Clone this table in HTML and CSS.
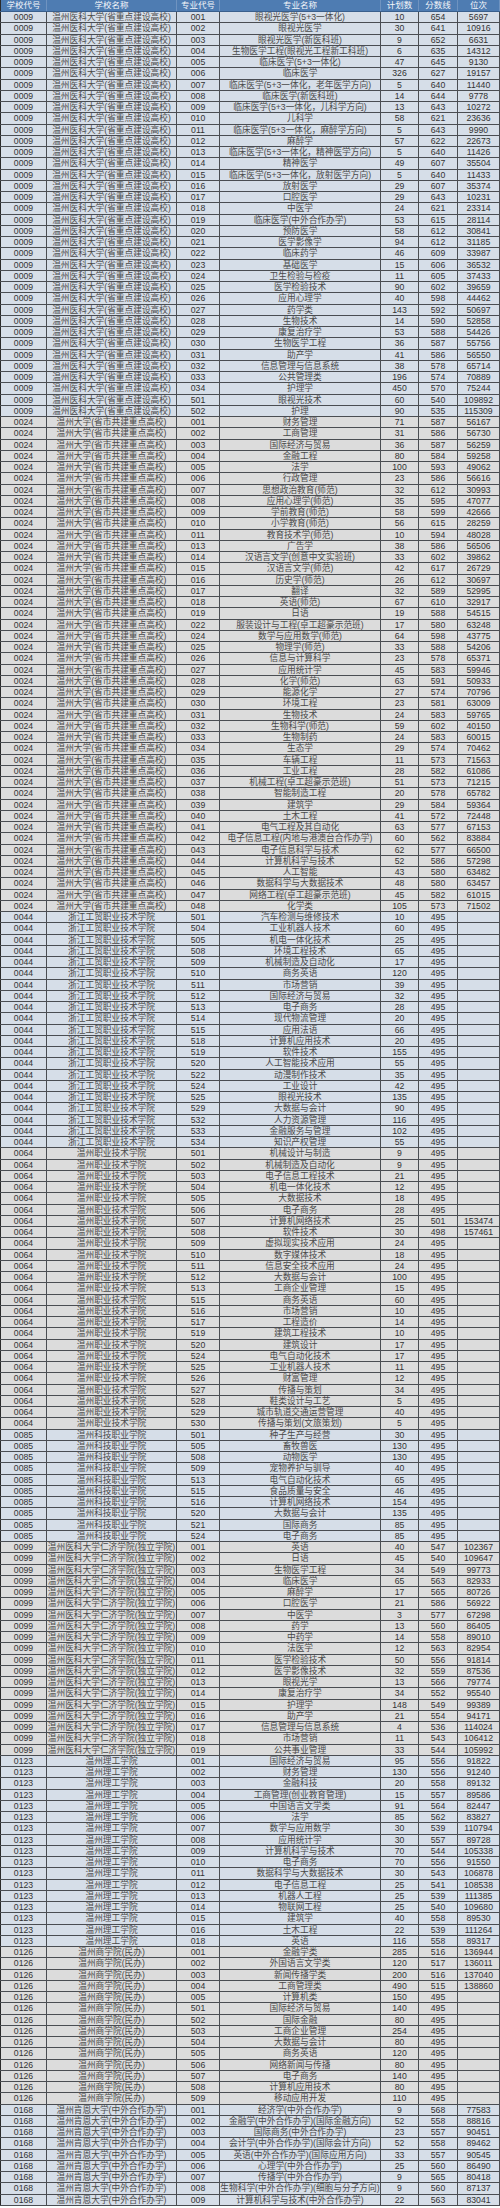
FILE: index.html
```html
<!DOCTYPE html>
<html lang="zh-CN">
<head>
<meta charset="utf-8">
<title>录取分数线</title>
<link rel="stylesheet" href="styles.css">
</head>
<body>
<div class="sheet">
<div class="row head"><span>学校代号</span><span>学校名称</span><span>专业代号</span><span>专业名称</span><span>计划数</span><span>分数线</span><span>位次</span></div>
<div class="row b"><span>0009</span><span>温州医科大学(省重点建设高校)</span><span>001</span><span>眼视光医学(5+3一体化)</span><span>10</span><span>654</span><span>5697</span></div>
<div class="row b"><span>0009</span><span>温州医科大学(省重点建设高校)</span><span>002</span><span>眼视光医学</span><span>30</span><span>641</span><span>10916</span></div>
<div class="row b"><span>0009</span><span>温州医科大学(省重点建设高校)</span><span>003</span><span>眼视光医学(新医科班)</span><span>9</span><span>652</span><span>6631</span></div>
<div class="row b"><span>0009</span><span>温州医科大学(省重点建设高校)</span><span>004</span><span>生物医学工程(眼视光工程新工科班)</span><span>6</span><span>635</span><span>14312</span></div>
<div class="row b"><span>0009</span><span>温州医科大学(省重点建设高校)</span><span>005</span><span>临床医学(5+3一体化)</span><span>47</span><span>645</span><span>9130</span></div>
<div class="row b"><span>0009</span><span>温州医科大学(省重点建设高校)</span><span>006</span><span>临床医学</span><span>326</span><span>627</span><span>19157</span></div>
<div class="row b"><span>0009</span><span>温州医科大学(省重点建设高校)</span><span>007</span><span>临床医学(5+3一体化，老年医学方向)</span><span>5</span><span>640</span><span>11440</span></div>
<div class="row b"><span>0009</span><span>温州医科大学(省重点建设高校)</span><span>008</span><span>临床医学(新医科班)</span><span>14</span><span>644</span><span>9778</span></div>
<div class="row b"><span>0009</span><span>温州医科大学(省重点建设高校)</span><span>009</span><span>临床医学(5+3一体化，儿科学方向)</span><span>13</span><span>643</span><span>10272</span></div>
<div class="row b"><span>0009</span><span>温州医科大学(省重点建设高校)</span><span>010</span><span>儿科学</span><span>58</span><span>621</span><span>23636</span></div>
<div class="row b"><span>0009</span><span>温州医科大学(省重点建设高校)</span><span>011</span><span>临床医学(5+3一体化，麻醉学方向)</span><span>5</span><span>643</span><span>9990</span></div>
<div class="row b"><span>0009</span><span>温州医科大学(省重点建设高校)</span><span>012</span><span>麻醉学</span><span>57</span><span>622</span><span>22673</span></div>
<div class="row b"><span>0009</span><span>温州医科大学(省重点建设高校)</span><span>013</span><span>临床医学(5+3一体化，精神医学方向)</span><span>5</span><span>640</span><span>11426</span></div>
<div class="row b"><span>0009</span><span>温州医科大学(省重点建设高校)</span><span>014</span><span>精神医学</span><span>49</span><span>607</span><span>35504</span></div>
<div class="row b"><span>0009</span><span>温州医科大学(省重点建设高校)</span><span>015</span><span>临床医学(5+3一体化，放射医学方向)</span><span>5</span><span>640</span><span>11433</span></div>
<div class="row b"><span>0009</span><span>温州医科大学(省重点建设高校)</span><span>016</span><span>放射医学</span><span>29</span><span>607</span><span>35374</span></div>
<div class="row b"><span>0009</span><span>温州医科大学(省重点建设高校)</span><span>017</span><span>口腔医学</span><span>29</span><span>643</span><span>10231</span></div>
<div class="row b"><span>0009</span><span>温州医科大学(省重点建设高校)</span><span>018</span><span>中医学</span><span>24</span><span>621</span><span>23314</span></div>
<div class="row b"><span>0009</span><span>温州医科大学(省重点建设高校)</span><span>019</span><span>临床医学(中外合作办学)</span><span>53</span><span>615</span><span>28114</span></div>
<div class="row b"><span>0009</span><span>温州医科大学(省重点建设高校)</span><span>020</span><span>预防医学</span><span>58</span><span>612</span><span>30841</span></div>
<div class="row b"><span>0009</span><span>温州医科大学(省重点建设高校)</span><span>021</span><span>医学影像学</span><span>94</span><span>612</span><span>31185</span></div>
<div class="row b"><span>0009</span><span>温州医科大学(省重点建设高校)</span><span>022</span><span>临床药学</span><span>46</span><span>609</span><span>33987</span></div>
<div class="row b"><span>0009</span><span>温州医科大学(省重点建设高校)</span><span>023</span><span>基础医学</span><span>15</span><span>606</span><span>36532</span></div>
<div class="row b"><span>0009</span><span>温州医科大学(省重点建设高校)</span><span>024</span><span>卫生检验与检疫</span><span>11</span><span>605</span><span>37433</span></div>
<div class="row b"><span>0009</span><span>温州医科大学(省重点建设高校)</span><span>025</span><span>医学检验技术</span><span>90</span><span>602</span><span>39659</span></div>
<div class="row b"><span>0009</span><span>温州医科大学(省重点建设高校)</span><span>026</span><span>应用心理学</span><span>40</span><span>598</span><span>44462</span></div>
<div class="row b"><span>0009</span><span>温州医科大学(省重点建设高校)</span><span>027</span><span>药学类</span><span>143</span><span>592</span><span>50697</span></div>
<div class="row b"><span>0009</span><span>温州医科大学(省重点建设高校)</span><span>028</span><span>生物技术</span><span>14</span><span>590</span><span>52858</span></div>
<div class="row b"><span>0009</span><span>温州医科大学(省重点建设高校)</span><span>029</span><span>康复治疗学</span><span>53</span><span>588</span><span>54426</span></div>
<div class="row b"><span>0009</span><span>温州医科大学(省重点建设高校)</span><span>030</span><span>生物医学工程</span><span>36</span><span>587</span><span>55756</span></div>
<div class="row b"><span>0009</span><span>温州医科大学(省重点建设高校)</span><span>031</span><span>助产学</span><span>41</span><span>586</span><span>56550</span></div>
<div class="row b"><span>0009</span><span>温州医科大学(省重点建设高校)</span><span>032</span><span>信息管理与信息系统</span><span>38</span><span>578</span><span>65714</span></div>
<div class="row b"><span>0009</span><span>温州医科大学(省重点建设高校)</span><span>033</span><span>公共管理类</span><span>196</span><span>574</span><span>70889</span></div>
<div class="row b"><span>0009</span><span>温州医科大学(省重点建设高校)</span><span>034</span><span>护理学</span><span>450</span><span>570</span><span>75244</span></div>
<div class="row b"><span>0009</span><span>温州医科大学(省重点建设高校)</span><span>501</span><span>眼视光技术</span><span>60</span><span>540</span><span>109892</span></div>
<div class="row b"><span>0009</span><span>温州医科大学(省重点建设高校)</span><span>502</span><span>护理</span><span>90</span><span>535</span><span>115309</span></div>
<div class="row g"><span>0024</span><span>温州大学(省市共建重点高校)</span><span>001</span><span>财务管理</span><span>71</span><span>587</span><span>56167</span></div>
<div class="row g"><span>0024</span><span>温州大学(省市共建重点高校)</span><span>002</span><span>工商管理</span><span>31</span><span>586</span><span>56730</span></div>
<div class="row g"><span>0024</span><span>温州大学(省市共建重点高校)</span><span>003</span><span>国际经济与贸易</span><span>36</span><span>587</span><span>56259</span></div>
<div class="row g"><span>0024</span><span>温州大学(省市共建重点高校)</span><span>004</span><span>金融工程</span><span>80</span><span>584</span><span>59258</span></div>
<div class="row g"><span>0024</span><span>温州大学(省市共建重点高校)</span><span>005</span><span>法学</span><span>100</span><span>593</span><span>49062</span></div>
<div class="row g"><span>0024</span><span>温州大学(省市共建重点高校)</span><span>006</span><span>行政管理</span><span>23</span><span>586</span><span>56616</span></div>
<div class="row g"><span>0024</span><span>温州大学(省市共建重点高校)</span><span>007</span><span>思想政治教育(师范)</span><span>32</span><span>612</span><span>30993</span></div>
<div class="row g"><span>0024</span><span>温州大学(省市共建重点高校)</span><span>008</span><span>应用心理学(师范)</span><span>35</span><span>595</span><span>47077</span></div>
<div class="row g"><span>0024</span><span>温州大学(省市共建重点高校)</span><span>009</span><span>学前教育(师范)</span><span>58</span><span>599</span><span>42666</span></div>
<div class="row g"><span>0024</span><span>温州大学(省市共建重点高校)</span><span>010</span><span>小学教育(师范)</span><span>56</span><span>615</span><span>28259</span></div>
<div class="row g"><span>0024</span><span>温州大学(省市共建重点高校)</span><span>011</span><span>教育技术学(师范)</span><span>10</span><span>594</span><span>48028</span></div>
<div class="row g"><span>0024</span><span>温州大学(省市共建重点高校)</span><span>013</span><span>广告学</span><span>38</span><span>586</span><span>56506</span></div>
<div class="row g"><span>0024</span><span>温州大学(省市共建重点高校)</span><span>014</span><span>汉语言文学(创意中文实验班)</span><span>33</span><span>602</span><span>39862</span></div>
<div class="row g"><span>0024</span><span>温州大学(省市共建重点高校)</span><span>015</span><span>汉语言文学(师范)</span><span>42</span><span>617</span><span>26729</span></div>
<div class="row g"><span>0024</span><span>温州大学(省市共建重点高校)</span><span>016</span><span>历史学(师范)</span><span>26</span><span>612</span><span>30697</span></div>
<div class="row g"><span>0024</span><span>温州大学(省市共建重点高校)</span><span>017</span><span>翻译</span><span>32</span><span>589</span><span>52995</span></div>
<div class="row g"><span>0024</span><span>温州大学(省市共建重点高校)</span><span>018</span><span>英语(师范)</span><span>67</span><span>610</span><span>32917</span></div>
<div class="row g"><span>0024</span><span>温州大学(省市共建重点高校)</span><span>019</span><span>日语</span><span>19</span><span>588</span><span>54515</span></div>
<div class="row g"><span>0024</span><span>温州大学(省市共建重点高校)</span><span>022</span><span>服装设计与工程(卓工超豪示范班)</span><span>17</span><span>580</span><span>63248</span></div>
<div class="row g"><span>0024</span><span>温州大学(省市共建重点高校)</span><span>024</span><span>数学与应用数学(师范)</span><span>64</span><span>598</span><span>43775</span></div>
<div class="row g"><span>0024</span><span>温州大学(省市共建重点高校)</span><span>025</span><span>物理学(师范)</span><span>33</span><span>588</span><span>54206</span></div>
<div class="row g"><span>0024</span><span>温州大学(省市共建重点高校)</span><span>026</span><span>信息与计算科学</span><span>23</span><span>578</span><span>65371</span></div>
<div class="row g"><span>0024</span><span>温州大学(省市共建重点高校)</span><span>027</span><span>应用统计学</span><span>45</span><span>583</span><span>59946</span></div>
<div class="row g"><span>0024</span><span>温州大学(省市共建重点高校)</span><span>028</span><span>化学(师范)</span><span>63</span><span>591</span><span>50933</span></div>
<div class="row g"><span>0024</span><span>温州大学(省市共建重点高校)</span><span>029</span><span>能源化学</span><span>27</span><span>574</span><span>70796</span></div>
<div class="row g"><span>0024</span><span>温州大学(省市共建重点高校)</span><span>030</span><span>环境工程</span><span>23</span><span>581</span><span>63009</span></div>
<div class="row g"><span>0024</span><span>温州大学(省市共建重点高校)</span><span>031</span><span>生物技术</span><span>24</span><span>583</span><span>59765</span></div>
<div class="row g"><span>0024</span><span>温州大学(省市共建重点高校)</span><span>032</span><span>生物科学(师范)</span><span>59</span><span>602</span><span>40150</span></div>
<div class="row g"><span>0024</span><span>温州大学(省市共建重点高校)</span><span>033</span><span>生物制药</span><span>24</span><span>583</span><span>60015</span></div>
<div class="row g"><span>0024</span><span>温州大学(省市共建重点高校)</span><span>034</span><span>生态学</span><span>29</span><span>574</span><span>70462</span></div>
<div class="row g"><span>0024</span><span>温州大学(省市共建重点高校)</span><span>035</span><span>车辆工程</span><span>11</span><span>573</span><span>71563</span></div>
<div class="row g"><span>0024</span><span>温州大学(省市共建重点高校)</span><span>036</span><span>工业工程</span><span>28</span><span>582</span><span>61086</span></div>
<div class="row g"><span>0024</span><span>温州大学(省市共建重点高校)</span><span>037</span><span>机械工程(卓工超豪示范班)</span><span>51</span><span>573</span><span>71215</span></div>
<div class="row g"><span>0024</span><span>温州大学(省市共建重点高校)</span><span>038</span><span>智能制造工程</span><span>20</span><span>578</span><span>65782</span></div>
<div class="row g"><span>0024</span><span>温州大学(省市共建重点高校)</span><span>039</span><span>建筑学</span><span>29</span><span>584</span><span>59364</span></div>
<div class="row g"><span>0024</span><span>温州大学(省市共建重点高校)</span><span>040</span><span>土木工程</span><span>41</span><span>572</span><span>72448</span></div>
<div class="row g"><span>0024</span><span>温州大学(省市共建重点高校)</span><span>041</span><span>电气工程及其自动化</span><span>63</span><span>577</span><span>67153</span></div>
<div class="row g"><span>0024</span><span>温州大学(省市共建重点高校)</span><span>042</span><span>电子信息工程(内地与港澳台合作办学)</span><span>60</span><span>562</span><span>83884</span></div>
<div class="row g"><span>0024</span><span>温州大学(省市共建重点高校)</span><span>043</span><span>电子信息科学与技术</span><span>62</span><span>577</span><span>66500</span></div>
<div class="row g"><span>0024</span><span>温州大学(省市共建重点高校)</span><span>044</span><span>计算机科学与技术</span><span>52</span><span>586</span><span>57298</span></div>
<div class="row g"><span>0024</span><span>温州大学(省市共建重点高校)</span><span>045</span><span>人工智能</span><span>43</span><span>580</span><span>63482</span></div>
<div class="row g"><span>0024</span><span>温州大学(省市共建重点高校)</span><span>046</span><span>数据科学与大数据技术</span><span>48</span><span>580</span><span>63457</span></div>
<div class="row g"><span>0024</span><span>温州大学(省市共建重点高校)</span><span>047</span><span>网络工程(卓工超豪示范班)</span><span>45</span><span>582</span><span>61015</span></div>
<div class="row g"><span>0024</span><span>温州大学(省市共建重点高校)</span><span>048</span><span>化学类</span><span>105</span><span>573</span><span>71502</span></div>
<div class="row b"><span>0044</span><span>浙江工贸职业技术学院</span><span>501</span><span>汽车检测与维修技术</span><span>10</span><span>495</span><span></span></div>
<div class="row b"><span>0044</span><span>浙江工贸职业技术学院</span><span>504</span><span>工业机器人技术</span><span>60</span><span>495</span><span></span></div>
<div class="row b"><span>0044</span><span>浙江工贸职业技术学院</span><span>505</span><span>机电一体化技术</span><span>25</span><span>495</span><span></span></div>
<div class="row b"><span>0044</span><span>浙江工贸职业技术学院</span><span>508</span><span>环境工程技术</span><span>65</span><span>495</span><span></span></div>
<div class="row b"><span>0044</span><span>浙江工贸职业技术学院</span><span>509</span><span>机械制造及自动化</span><span>17</span><span>495</span><span></span></div>
<div class="row b"><span>0044</span><span>浙江工贸职业技术学院</span><span>510</span><span>商务英语</span><span>120</span><span>495</span><span></span></div>
<div class="row b"><span>0044</span><span>浙江工贸职业技术学院</span><span>511</span><span>市场营销</span><span>39</span><span>495</span><span></span></div>
<div class="row b"><span>0044</span><span>浙江工贸职业技术学院</span><span>512</span><span>国际经济与贸易</span><span>32</span><span>495</span><span></span></div>
<div class="row b"><span>0044</span><span>浙江工贸职业技术学院</span><span>513</span><span>电子商务</span><span>28</span><span>495</span><span></span></div>
<div class="row b"><span>0044</span><span>浙江工贸职业技术学院</span><span>514</span><span>现代物流管理</span><span>20</span><span>495</span><span></span></div>
<div class="row b"><span>0044</span><span>浙江工贸职业技术学院</span><span>515</span><span>应用法语</span><span>66</span><span>495</span><span></span></div>
<div class="row b"><span>0044</span><span>浙江工贸职业技术学院</span><span>518</span><span>计算机应用技术</span><span>20</span><span>495</span><span></span></div>
<div class="row b"><span>0044</span><span>浙江工贸职业技术学院</span><span>519</span><span>软件技术</span><span>155</span><span>495</span><span></span></div>
<div class="row b"><span>0044</span><span>浙江工贸职业技术学院</span><span>520</span><span>人工智能技术应用</span><span>55</span><span>495</span><span></span></div>
<div class="row b"><span>0044</span><span>浙江工贸职业技术学院</span><span>522</span><span>动漫制作技术</span><span>35</span><span>495</span><span></span></div>
<div class="row b"><span>0044</span><span>浙江工贸职业技术学院</span><span>524</span><span>工业设计</span><span>42</span><span>495</span><span></span></div>
<div class="row b"><span>0044</span><span>浙江工贸职业技术学院</span><span>525</span><span>眼视光技术</span><span>135</span><span>495</span><span></span></div>
<div class="row b"><span>0044</span><span>浙江工贸职业技术学院</span><span>529</span><span>大数据与会计</span><span>90</span><span>495</span><span></span></div>
<div class="row b"><span>0044</span><span>浙江工贸职业技术学院</span><span>532</span><span>人力资源管理</span><span>116</span><span>495</span><span></span></div>
<div class="row b"><span>0044</span><span>浙江工贸职业技术学院</span><span>533</span><span>金融服务与管理</span><span>102</span><span>495</span><span></span></div>
<div class="row b"><span>0044</span><span>浙江工贸职业技术学院</span><span>534</span><span>知识产权管理</span><span>55</span><span>495</span><span></span></div>
<div class="row g"><span>0064</span><span>温州职业技术学院</span><span>501</span><span>机械设计与制造</span><span>9</span><span>495</span><span></span></div>
<div class="row g"><span>0064</span><span>温州职业技术学院</span><span>502</span><span>机械制造及自动化</span><span>9</span><span>495</span><span></span></div>
<div class="row g"><span>0064</span><span>温州职业技术学院</span><span>503</span><span>电子信息工程技术</span><span>21</span><span>495</span><span></span></div>
<div class="row g"><span>0064</span><span>温州职业技术学院</span><span>504</span><span>机电一体化技术</span><span>12</span><span>495</span><span></span></div>
<div class="row g"><span>0064</span><span>温州职业技术学院</span><span>505</span><span>大数据技术</span><span>18</span><span>495</span><span></span></div>
<div class="row g"><span>0064</span><span>温州职业技术学院</span><span>506</span><span>电子商务</span><span>28</span><span>495</span><span></span></div>
<div class="row g"><span>0064</span><span>温州职业技术学院</span><span>507</span><span>计算机网络技术</span><span>25</span><span>501</span><span>153474</span></div>
<div class="row g"><span>0064</span><span>温州职业技术学院</span><span>508</span><span>软件技术</span><span>30</span><span>498</span><span>157461</span></div>
<div class="row g"><span>0064</span><span>温州职业技术学院</span><span>509</span><span>虚拟现实技术应用</span><span>24</span><span>495</span><span></span></div>
<div class="row g"><span>0064</span><span>温州职业技术学院</span><span>510</span><span>数字媒体技术</span><span>18</span><span>495</span><span></span></div>
<div class="row g"><span>0064</span><span>温州职业技术学院</span><span>511</span><span>信息安全技术应用</span><span>24</span><span>495</span><span></span></div>
<div class="row g"><span>0064</span><span>温州职业技术学院</span><span>512</span><span>大数据与会计</span><span>100</span><span>495</span><span></span></div>
<div class="row g"><span>0064</span><span>温州职业技术学院</span><span>513</span><span>工商企业管理</span><span>15</span><span>495</span><span></span></div>
<div class="row g"><span>0064</span><span>温州职业技术学院</span><span>515</span><span>商务英语</span><span>60</span><span>495</span><span></span></div>
<div class="row g"><span>0064</span><span>温州职业技术学院</span><span>516</span><span>市场营销</span><span>10</span><span>495</span><span></span></div>
<div class="row g"><span>0064</span><span>温州职业技术学院</span><span>517</span><span>工程造价</span><span>14</span><span>495</span><span></span></div>
<div class="row g"><span>0064</span><span>温州职业技术学院</span><span>519</span><span>建筑工程技术</span><span>10</span><span>495</span><span></span></div>
<div class="row g"><span>0064</span><span>温州职业技术学院</span><span>520</span><span>建筑设计</span><span>17</span><span>495</span><span></span></div>
<div class="row g"><span>0064</span><span>温州职业技术学院</span><span>524</span><span>电气自动化技术</span><span>17</span><span>495</span><span></span></div>
<div class="row g"><span>0064</span><span>温州职业技术学院</span><span>525</span><span>工业机器人技术</span><span>11</span><span>495</span><span></span></div>
<div class="row g"><span>0064</span><span>温州职业技术学院</span><span>526</span><span>财富管理</span><span>12</span><span>495</span><span></span></div>
<div class="row g"><span>0064</span><span>温州职业技术学院</span><span>527</span><span>传播与策划</span><span>34</span><span>495</span><span></span></div>
<div class="row g"><span>0064</span><span>温州职业技术学院</span><span>528</span><span>鞋类设计与工艺</span><span>5</span><span>495</span><span></span></div>
<div class="row g"><span>0064</span><span>温州职业技术学院</span><span>529</span><span>城市轨道交通运营管理</span><span>40</span><span>495</span><span></span></div>
<div class="row g"><span>0064</span><span>温州职业技术学院</span><span>530</span><span>传播与策划(文旅策划)</span><span>5</span><span>495</span><span></span></div>
<div class="row b"><span>0085</span><span>温州科技职业学院</span><span>501</span><span>种子生产与经营</span><span>30</span><span>495</span><span></span></div>
<div class="row b"><span>0085</span><span>温州科技职业学院</span><span>505</span><span>畜牧兽医</span><span>130</span><span>495</span><span></span></div>
<div class="row b"><span>0085</span><span>温州科技职业学院</span><span>508</span><span>动物医学</span><span>130</span><span>495</span><span></span></div>
<div class="row b"><span>0085</span><span>温州科技职业学院</span><span>509</span><span>宠物养护与驯导</span><span>40</span><span>495</span><span></span></div>
<div class="row b"><span>0085</span><span>温州科技职业学院</span><span>513</span><span>电气自动化技术</span><span>65</span><span>495</span><span></span></div>
<div class="row b"><span>0085</span><span>温州科技职业学院</span><span>515</span><span>食品质量与安全</span><span>46</span><span>495</span><span></span></div>
<div class="row b"><span>0085</span><span>温州科技职业学院</span><span>516</span><span>计算机网络技术</span><span>154</span><span>495</span><span></span></div>
<div class="row b"><span>0085</span><span>温州科技职业学院</span><span>520</span><span>大数据与会计</span><span>135</span><span>495</span><span></span></div>
<div class="row b"><span>0085</span><span>温州科技职业学院</span><span>521</span><span>国际商务</span><span>85</span><span>495</span><span></span></div>
<div class="row b"><span>0085</span><span>温州科技职业学院</span><span>524</span><span>电子商务</span><span>85</span><span>495</span><span></span></div>
<div class="row g"><span>0099</span><span>温州医科大学仁济学院(独立学院)</span><span>001</span><span>英语</span><span>40</span><span>547</span><span>102367</span></div>
<div class="row g"><span>0099</span><span>温州医科大学仁济学院(独立学院)</span><span>002</span><span>日语</span><span>45</span><span>540</span><span>109647</span></div>
<div class="row g"><span>0099</span><span>温州医科大学仁济学院(独立学院)</span><span>003</span><span>生物医学工程</span><span>34</span><span>549</span><span>99773</span></div>
<div class="row g"><span>0099</span><span>温州医科大学仁济学院(独立学院)</span><span>004</span><span>临床医学</span><span>65</span><span>563</span><span>82933</span></div>
<div class="row g"><span>0099</span><span>温州医科大学仁济学院(独立学院)</span><span>005</span><span>麻醉学</span><span>17</span><span>565</span><span>80726</span></div>
<div class="row g"><span>0099</span><span>温州医科大学仁济学院(独立学院)</span><span>006</span><span>口腔医学</span><span>21</span><span>586</span><span>56922</span></div>
<div class="row g"><span>0099</span><span>温州医科大学仁济学院(独立学院)</span><span>007</span><span>中医学</span><span>3</span><span>577</span><span>67298</span></div>
<div class="row g"><span>0099</span><span>温州医科大学仁济学院(独立学院)</span><span>008</span><span>药学</span><span>13</span><span>560</span><span>86405</span></div>
<div class="row g"><span>0099</span><span>温州医科大学仁济学院(独立学院)</span><span>009</span><span>中药学</span><span>14</span><span>558</span><span>89010</span></div>
<div class="row g"><span>0099</span><span>温州医科大学仁济学院(独立学院)</span><span>010</span><span>法医学</span><span>12</span><span>563</span><span>82954</span></div>
<div class="row g"><span>0099</span><span>温州医科大学仁济学院(独立学院)</span><span>011</span><span>医学检验技术</span><span>50</span><span>556</span><span>91814</span></div>
<div class="row g"><span>0099</span><span>温州医科大学仁济学院(独立学院)</span><span>012</span><span>医学影像技术</span><span>32</span><span>559</span><span>87536</span></div>
<div class="row g"><span>0099</span><span>温州医科大学仁济学院(独立学院)</span><span>013</span><span>眼视光学</span><span>13</span><span>566</span><span>79774</span></div>
<div class="row g"><span>0099</span><span>温州医科大学仁济学院(独立学院)</span><span>014</span><span>康复治疗学</span><span>34</span><span>552</span><span>95540</span></div>
<div class="row g"><span>0099</span><span>温州医科大学仁济学院(独立学院)</span><span>015</span><span>护理学</span><span>148</span><span>549</span><span>99389</span></div>
<div class="row g"><span>0099</span><span>温州医科大学仁济学院(独立学院)</span><span>016</span><span>助产学</span><span>21</span><span>554</span><span>94171</span></div>
<div class="row g"><span>0099</span><span>温州医科大学仁济学院(独立学院)</span><span>017</span><span>信息管理与信息系统</span><span>4</span><span>536</span><span>114024</span></div>
<div class="row g"><span>0099</span><span>温州医科大学仁济学院(独立学院)</span><span>018</span><span>市场营销</span><span>11</span><span>543</span><span>106412</span></div>
<div class="row g"><span>0099</span><span>温州医科大学仁济学院(独立学院)</span><span>019</span><span>公共事业管理</span><span>33</span><span>544</span><span>105992</span></div>
<div class="row b"><span>0123</span><span>温州理工学院</span><span>001</span><span>国际经济与贸易</span><span>95</span><span>556</span><span>91822</span></div>
<div class="row b"><span>0123</span><span>温州理工学院</span><span>002</span><span>财务管理</span><span>130</span><span>556</span><span>91240</span></div>
<div class="row b"><span>0123</span><span>温州理工学院</span><span>003</span><span>金融科技</span><span>20</span><span>558</span><span>89132</span></div>
<div class="row b"><span>0123</span><span>温州理工学院</span><span>004</span><span>工商管理(创业教育管理)</span><span>15</span><span>557</span><span>89586</span></div>
<div class="row b"><span>0123</span><span>温州理工学院</span><span>005</span><span>中国语言文学类</span><span>91</span><span>564</span><span>82447</span></div>
<div class="row b"><span>0123</span><span>温州理工学院</span><span>006</span><span>法学</span><span>85</span><span>562</span><span>83827</span></div>
<div class="row b"><span>0123</span><span>温州理工学院</span><span>007</span><span>数学与应用数学</span><span>30</span><span>539</span><span>110794</span></div>
<div class="row b"><span>0123</span><span>温州理工学院</span><span>008</span><span>应用统计学</span><span>30</span><span>557</span><span>89728</span></div>
<div class="row b"><span>0123</span><span>温州理工学院</span><span>009</span><span>计算机科学与技术</span><span>70</span><span>544</span><span>105338</span></div>
<div class="row b"><span>0123</span><span>温州理工学院</span><span>010</span><span>电子商务</span><span>70</span><span>556</span><span>91550</span></div>
<div class="row b"><span>0123</span><span>温州理工学院</span><span>011</span><span>数据科学与大数据技术</span><span>30</span><span>543</span><span>106878</span></div>
<div class="row b"><span>0123</span><span>温州理工学院</span><span>012</span><span>电子信息工程</span><span>25</span><span>541</span><span>108538</span></div>
<div class="row b"><span>0123</span><span>温州理工学院</span><span>013</span><span>机器人工程</span><span>25</span><span>539</span><span>111385</span></div>
<div class="row b"><span>0123</span><span>温州理工学院</span><span>014</span><span>物联网工程</span><span>25</span><span>540</span><span>109680</span></div>
<div class="row b"><span>0123</span><span>温州理工学院</span><span>015</span><span>建筑学</span><span>40</span><span>558</span><span>89530</span></div>
<div class="row b"><span>0123</span><span>温州理工学院</span><span>016</span><span>土木工程</span><span>22</span><span>539</span><span>111264</span></div>
<div class="row b"><span>0123</span><span>温州理工学院</span><span>018</span><span>英语</span><span>116</span><span>558</span><span>89317</span></div>
<div class="row g"><span>0126</span><span>温州商学院(民办)</span><span>001</span><span>金融学类</span><span>285</span><span>516</span><span>136944</span></div>
<div class="row g"><span>0126</span><span>温州商学院(民办)</span><span>002</span><span>外国语言文学类</span><span>120</span><span>517</span><span>136011</span></div>
<div class="row g"><span>0126</span><span>温州商学院(民办)</span><span>003</span><span>新闻传播学类</span><span>200</span><span>516</span><span>137040</span></div>
<div class="row g"><span>0126</span><span>温州商学院(民办)</span><span>004</span><span>工商管理类</span><span>490</span><span>515</span><span>138860</span></div>
<div class="row g"><span>0126</span><span>温州商学院(民办)</span><span>005</span><span>计算机类</span><span>150</span><span>495</span><span></span></div>
<div class="row g"><span>0126</span><span>温州商学院(民办)</span><span>501</span><span>国际经济与贸易</span><span>140</span><span>495</span><span></span></div>
<div class="row g"><span>0126</span><span>温州商学院(民办)</span><span>502</span><span>国际金融</span><span>80</span><span>495</span><span></span></div>
<div class="row g"><span>0126</span><span>温州商学院(民办)</span><span>503</span><span>工商企业管理</span><span>254</span><span>495</span><span></span></div>
<div class="row g"><span>0126</span><span>温州商学院(民办)</span><span>504</span><span>大数据与会计</span><span>80</span><span>495</span><span></span></div>
<div class="row g"><span>0126</span><span>温州商学院(民办)</span><span>505</span><span>商务英语</span><span>120</span><span>495</span><span></span></div>
<div class="row g"><span>0126</span><span>温州商学院(民办)</span><span>506</span><span>网络新闻与传播</span><span>80</span><span>495</span><span></span></div>
<div class="row g"><span>0126</span><span>温州商学院(民办)</span><span>507</span><span>电子商务</span><span>140</span><span>495</span><span></span></div>
<div class="row g"><span>0126</span><span>温州商学院(民办)</span><span>508</span><span>计算机应用技术</span><span>80</span><span>495</span><span></span></div>
<div class="row g"><span>0126</span><span>温州商学院(民办)</span><span>509</span><span>移动应用开发</span><span>110</span><span>495</span><span></span></div>
<div class="row b"><span>0168</span><span>温州肯恩大学(中外合作办学)</span><span>001</span><span>经济学(中外合作办学)</span><span>9</span><span>568</span><span>77583</span></div>
<div class="row b"><span>0168</span><span>温州肯恩大学(中外合作办学)</span><span>002</span><span>金融学(中外合作办学)(国际金融方向)</span><span>52</span><span>558</span><span>88816</span></div>
<div class="row b"><span>0168</span><span>温州肯恩大学(中外合作办学)</span><span>003</span><span>国际商务(中外合作办学)</span><span>23</span><span>557</span><span>90451</span></div>
<div class="row b"><span>0168</span><span>温州肯恩大学(中外合作办学)</span><span>004</span><span>会计学(中外合作办学)(国际会计方向)</span><span>52</span><span>558</span><span>89462</span></div>
<div class="row b"><span>0168</span><span>温州肯恩大学(中外合作办学)</span><span>005</span><span>英语(中外合作办学)(国际应用方向)</span><span>33</span><span>557</span><span>90545</span></div>
<div class="row b"><span>0168</span><span>温州肯恩大学(中外合作办学)</span><span>006</span><span>心理学(中外合作办学)</span><span>25</span><span>560</span><span>86490</span></div>
<div class="row b"><span>0168</span><span>温州肯恩大学(中外合作办学)</span><span>007</span><span>传播学(中外合作办学)</span><span>9</span><span>565</span><span>80418</span></div>
<div class="row b"><span>0168</span><span>温州肯恩大学(中外合作办学)</span><span>008</span><span>生物科学(中外合作办学)(细胞与分子方向)</span><span>9</span><span>560</span><span>87137</span></div>
<div class="row b"><span>0168</span><span>温州肯恩大学(中外合作办学)</span><span>009</span><span>计算机科学与技术(中外合作办学)</span><span>22</span><span>563</span><span>83041</span></div>
</div>
</body>
</html>
```

FILE: styles.css
```css
html, body {
  margin: 0;
  padding: 0;
  background: #ffffff;
}

body {
  font-family: "Liberation Sans", "Noto Sans CJK SC", sans-serif;
  color: #333333;
}

.sheet {
  width: 500px;
}

.row {
  display: grid;
  grid-template-columns: 47px 130px 43px 161px 38px 39px 42px;
  height: 11.26px;
  box-sizing: border-box;
  border-bottom: 1px solid #4a4d52;
}

.row > span {
  box-sizing: border-box;
  border-right: 1px solid #4a4d52;
  text-align: center;
  font-size: 8.7px;
  line-height: 10.26px;
  white-space: nowrap;
  overflow: hidden;
}

.row > span:first-child {
  border-left: 1px solid #2a2a2a;
}

.row > span:nth-child(2),
.row > span:nth-child(4) {
  color: #4a4a4a;
}

.row.head {
  height: 12px;
  background: #4e7cb2;
  border-bottom-color: #3a5f8c;
}

.row.head > span {
  color: #f4f6fa;
  font-size: 8.5px;
  line-height: 11px;
  border-right-color: #6f93c0;
}

.row.b {
  background: #d6dee8;
}

.row.g {
  background: #dcdcdc;
}
```
